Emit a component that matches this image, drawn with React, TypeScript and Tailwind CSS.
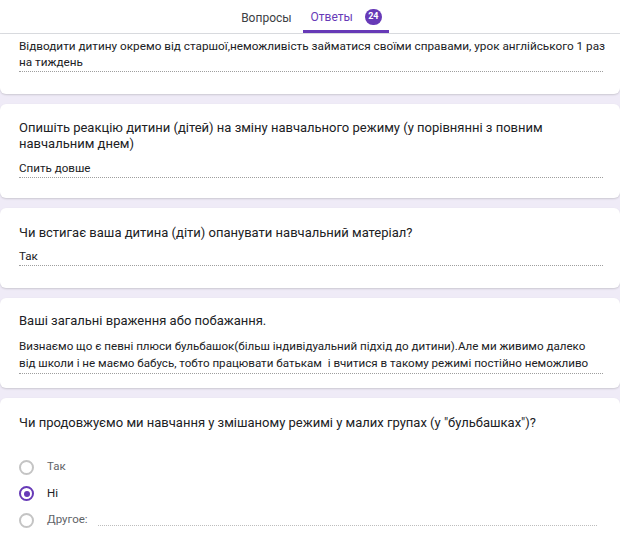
import React from "react";

const Radio = ({ checked }: { checked?: boolean }) => (
  <span
    className={`flex h-[15px] w-[15px] shrink-0 items-center justify-center rounded-full border-2 ${
      checked ? "border-[#673ab7]" : "border-[#c4c4c4]"
    }`}
  >
    {checked && <span className="h-[6px] w-[6px] rounded-full bg-[#673ab7]" />}
  </span>
);

const Answer = ({ children, size = "text-[11.6px] leading-[16px]" }: { children: React.ReactNode; size?: string }) => (
  <div className={`mr-[17px] border-b border-dotted border-[#9e9e9e] pb-[1px] text-[#202124] ${size}`}>
    {children}
  </div>
);

export default function App() {
  return (
    <div className="min-h-screen bg-[#efebf7] font-['Roboto',sans-serif] text-[#202124]">
      {/* tabs */}
      <div className="flex h-[34px] justify-center border-b border-[#dadce0] bg-white">
        <div className="flex items-end">
          <div className="flex h-[31px] items-center pl-[10px] pr-[11px] text-[12px] text-[#3c4043]">Вопросы</div>
          <div className="flex h-[31px] items-center gap-[12px] border-b-[3px] border-[#673ab7] pl-[8px] pr-[7px] pt-[2px] text-[12px] text-[#673ab7]">
            <span>Ответы</span>
            <span className="flex h-[16px] w-[17px] items-center justify-center rounded-full bg-[#673ab7] text-[9px] font-bold text-white">
              24
            </span>
          </div>
        </div>
      </div>

      <div className="flex flex-col gap-[10px]">
        <div className="rounded-b-[6px] bg-white pb-[22px] pl-[19px] pt-[4px] shadow-[0_1px_2px_rgba(0,0,0,0.15)]">
          <Answer size="whitespace-nowrap text-[11.75px] leading-[16px]">
            Відводити дитину окремо від старшої,неможливість займатися своїми справами, урок англійського 1 раз
            <br />
            на тиждень
          </Answer>
        </div>

        <div className="rounded-[6px] bg-white pb-[20px] pl-[19px] pt-[16px] shadow-[0_1px_2px_rgba(0,0,0,0.15)]">
          <div className="pr-[60px] text-[13px] leading-[16px]">
            Опишіть реакцію дитини (дітей) на зміну навчального режиму (у порівнянні з повним навчальним днем)
          </div>
          <div className="mt-[8px]">
            <Answer>Спить довше</Answer>
          </div>
        </div>

        <div className="rounded-[6px] bg-white pb-[22px] pl-[19px] pt-[17px] shadow-[0_1px_2px_rgba(0,0,0,0.15)]">
          <div className="text-[13px] leading-[16px]">
            Чи встигає ваша дитина (діти) опанувати навчальний матеріал?
          </div>
          <div className="mt-[7px]">
            <Answer>Так</Answer>
          </div>
        </div>

        <div className="rounded-[6px] bg-white pb-[14px] pl-[19px] pt-[15px] shadow-[0_1px_2px_rgba(0,0,0,0.15)]">
          <div className="text-[13px] leading-[16px]">Ваші загальні враження або побажання.</div>
          <div className="mt-[9px]">
            <Answer size="text-[11.6px] leading-[17px]">
              Визнаємо що є певні плюси бульбашок(більш індивідуальний підхід до дитини).Але ми живимо далеко від школи і не маємо бабусь, тобто працювати батькам&nbsp; і вчитися в такому режимі постійно неможливо
            </Answer>
          </div>
        </div>

        <div className="rounded-t-[6px] bg-white pb-[20px] pl-[19px] pt-[17px] shadow-[0_1px_2px_rgba(0,0,0,0.15)]">
          <div className="text-[13px] leading-[16px]">
            Чи продовжуємо ми навчання у змішаному режимі у малих групах (у "бульбашках")?
          </div>
          <div className="mt-[28px] flex flex-col gap-[10.5px] text-[11.5px]">
            <div className="flex h-[16px] items-center gap-[13px]">
              <Radio />
              <span className="text-[#5f6368]">Так</span>
            </div>
            <div className="flex h-[16px] items-center gap-[13px]">
              <Radio checked />
              <span className="text-[#202124]">Ні</span>
            </div>
            <div className="flex h-[16px] items-center">
              <Radio />
              <span className="ml-[13px] text-[#5f6368]">Другое:</span>
              <span className="ml-[10px] mr-[23px] mt-[10px] flex-1 border-b border-dotted border-[#bdbdbd]" />
            </div>
          </div>
        </div>
      </div>
    </div>
  );
}
